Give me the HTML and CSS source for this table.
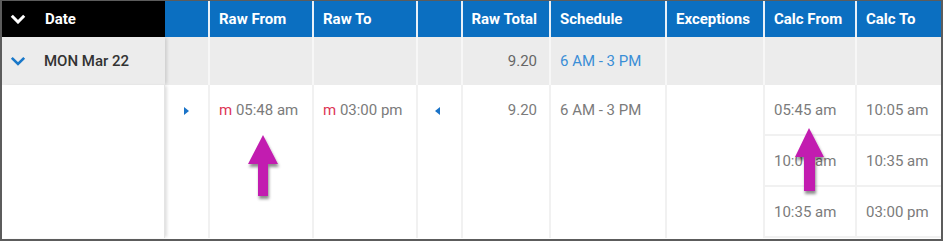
FILE: index.html
```html
<!DOCTYPE html>
<html>
<head>
<meta charset="utf-8">
<link rel="stylesheet" href="styles.css">
</head>
<body>
<div class="frame">
  <div class="grid">
    <div class="hd hd-date"><svg class="chev" width="16" height="10" viewBox="0 0 16 10"><polyline points="1.8,1.8 8,8 14.2,1.8" fill="none" stroke="#fff" stroke-width="3"/></svg><span>Date</span></div>
    <div class="hd hd-blue c2"></div>
    <div class="hd hd-blue ln">Raw From</div>
    <div class="hd hd-blue ln">Raw To</div>
    <div class="hd hd-blue ln"></div>
    <div class="hd hd-blue ln right">Raw Total</div>
    <div class="hd hd-blue ln">Schedule</div>
    <div class="hd hd-blue ln">Exceptions</div>
    <div class="hd hd-blue ln">Calc From</div>
    <div class="hd hd-blue ln">Calc To</div>

    <div class="gr gr-date"><svg class="chev" width="16" height="10" viewBox="0 0 16 10"><polyline points="1.8,1.8 8,8 14.2,1.8" fill="none" stroke="#1a78c9" stroke-width="2.6"/></svg><span>MON Mar 22</span></div>
    <div class="gr"></div>
    <div class="gr ln"></div>
    <div class="gr ln"></div>
    <div class="gr ln"></div>
    <div class="gr ln right">9.20</div>
    <div class="gr ln link">6 AM - 3 PM</div>
    <div class="gr ln"></div>
    <div class="gr ln"></div>
    <div class="gr ln"></div>

    <div class="dt dt-date"></div>
    <div class="dt tri-cell"><span class="tri tri-r"></span></div>
    <div class="dt ln"><span class="m">m</span> 05:48 am</div>
    <div class="dt ln"><span class="m">m</span> 03:00 pm</div>
    <div class="dt ln tri-cell"><span class="tri tri-l"></span></div>
    <div class="dt ln right">9.20</div>
    <div class="dt ln">6 AM - 3 PM</div>
    <div class="dt ln"></div>
    <div class="sub ln cf r1">05:45 am</div>
    <div class="sub ln ct r1">10:05 am</div>
    <div class="sub ln cf r2">10:05 am</div>
    <div class="sub ln ct r2">10:35 am</div>
    <div class="sub ln cf r3">10:35 am</div>
    <div class="sub ln ct r3">03:00 pm</div>
  </div>
  <svg class="overlay" width="943" height="241" viewBox="0 0 943 241">
    <defs>
      <filter id="sh" x="-50%" y="-50%" width="200%" height="200%">
        <feDropShadow dx="1" dy="3" stdDeviation="1.8" flood-color="#000" flood-opacity="0.45"/>
      </filter>
    </defs>
    <polygon filter="url(#sh)" fill="#c21fb0" points="263,135 278,164 268,164 268,196 258,196 258,164 248,164"/>
    <polygon filter="url(#sh)" fill="#c21fb0" points="809,128 824,157 815,157 815,191 804,191 804,157 795,157"/>
  </svg>
</div>
</body>
</html>
```
FILE: styles.css
```css
* { box-sizing: border-box; }
html, body { margin: 0; padding: 0; background: #fff; }
body { font-family: Roboto, "Noto Sans", Arial, sans-serif; font-size: 15px; color: #7b7b7b; }

.frame {
  position: relative;
  width: 943px;
  height: 241px;
  border: 2px solid #5c5c5c;
  border-top-width: 1px;
  overflow: hidden;
}

.grid {
  display: grid;
  grid-template-columns: 163px 43px 104px 104px 45px 88px 116px 98px 92px 1fr;
  grid-template-rows: 36px 48px 51px 51px 51px;
}

.hd {
  display: flex;
  align-items: center;
  color: #fff;
  font-weight: 700;
  font-size: 15px;
  padding-left: 9px;
  white-space: nowrap;
}
.hd-date { background: #000; padding-left: 8px; position: relative; z-index: 2; }
.hd-date .chev { margin-right: 19px; }
.hd-blue { background: #0b6fc1; }
.hd.ln { border-left: 2px solid #e8f0f8; }
.hd.right { justify-content: flex-end; padding-right: 12px; }

.gr {
  background: #ececec;
  display: flex;
  align-items: center;
  padding-left: 9px;
  color: #666;
  white-space: nowrap;
}
.gr.ln { border-left: 2px solid #f7f7f7; }
.gr.right { justify-content: flex-end; padding-right: 12px; }
.gr.link { color: #3a8ed6; }
.gr-date {
  padding-left: 8px;
  color: #333;
  font-size: 15px;
  font-weight: 500;
  position: relative;
  z-index: 2;
  box-shadow: 3px 0 3px -1px rgba(0,0,0,0.13);
}
.gr-date .chev { margin-right: 18px; }

.dt {
  grid-row: 3 / span 3;
  padding: 17px 0 0 9px;
  line-height: 17px;
  white-space: nowrap;
  background: #fff;
}
.dt.ln { border-left: 2px solid #f1f1f1; }
.dt.right { text-align: right; padding-right: 12px; }
.dt-date {
  position: relative;
  z-index: 2;
  box-shadow: 3px 0 3px -1px rgba(0,0,0,0.13);
  border-right: 1px solid #e4e4e4;
}
.m { color: #dd3355; }

.tri-cell { padding-top: 22px; padding-left: 19px; }
.tri-cell.ln { padding-left: 17px; }
.tri {
  display: block;
  width: 0;
  height: 0;
  border-top: 4px solid transparent;
  border-bottom: 4px solid transparent;
}
.tri-r { border-left: 5px solid #1a73c8; }
.tri-l { border-right: 5px solid #1a73c8; }

.sub {
  display: flex;
  align-items: center;
  padding-left: 9px;
  white-space: nowrap;
  border-bottom: 2px solid #f1f1f1;
}
.sub.ln { border-left: 2px solid #f1f1f1; }
.cf { grid-column: 9; }
.ct { grid-column: 10; }
.r1 { grid-row: 3; }
.r2 { grid-row: 4; }
.r3 { grid-row: 5; }

.overlay {
  position: absolute;
  left: -2px;
  top: -1px;
  pointer-events: none;
}
```
